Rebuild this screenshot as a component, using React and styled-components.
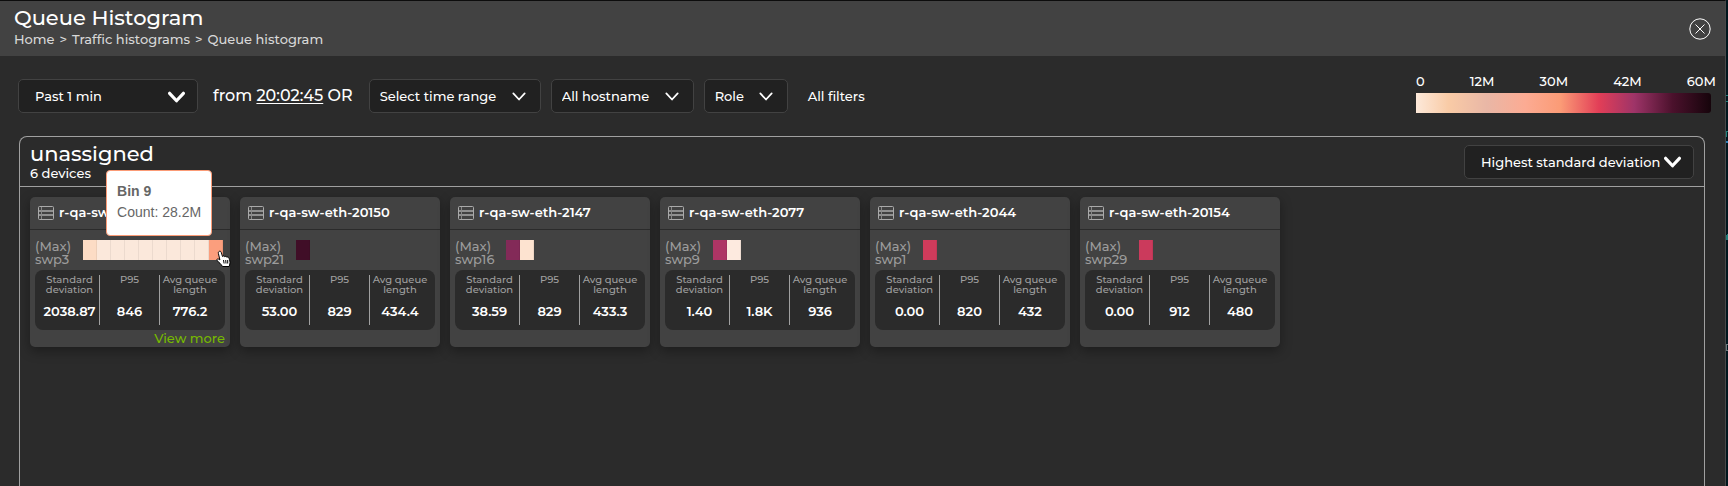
import React from "react";
import styled, { createGlobalStyle } from "styled-components";

const Global = createGlobalStyle`
  *, *::before, *::after { box-sizing: border-box; }
  body { margin: 0; background: #01161d; }
  button, select { font: inherit; color: inherit; }
  h1, h2, h3, p, dl, dt, dd, ol { margin: 0; padding: 0; font-weight: inherit; }
`;

const Page = styled.div`
  display: flex;
  min-height: 100vh;
`;

const Behind = styled.svg`
  flex: none;
`;

const Drawer = styled.div`
  flex: 1;
  display: flex;
  flex-direction: column;
  border-top: 1px solid #0c0c0c;
  border-right: 1px solid #484848;
  background: #2b2b2b;
  color: #fff;
  font-family: Montserrat, Inter, sans-serif;
  font-size: 13px;
  font-weight: 500;
  line-height: 16px;
`;

const Header = styled.header`
  display: flex;
  align-items: center;
  justify-content: space-between;
  height: 55px;
  padding: 0 14px;
  background: #424242;
`;

const Title = styled.h1`
  font-size: 21px;
  line-height: 26px;
`;

const Crumbs = styled.ol`
  display: flex;
  gap: 5px;
  list-style: none;
  color: #d8d8d8;
  margin-bottom: 5px;
  a { color: inherit; text-decoration: none; }
`;

const Crumb = styled.li`
  display: flex;
  gap: 5px;
  &:not(:last-child)::after { content: ">"; }
`;

const IconButton = styled.button`
  display: flex;
  padding: 0;
  border: 0;
  background: none;
  cursor: pointer;
`;

const Toolbar = styled.div`
  display: flex;
  align-items: flex-end;
  gap: 10px;
  padding: 17px 9px 0 18px;
`;

const Picker = styled.label`
  display: grid;
  align-items: center;
  width: ${(p) => p.$width}px;
  svg {
    grid-area: 1 / 1;
    justify-self: end;
    margin-right: ${(p) => p.$inset}px;
    pointer-events: none;
  }
`;

const Select = styled.select`
  grid-area: 1 / 1;
  width: 100%;
  height: 34px;
  padding: 0 ${(p) => p.$pad}px;
  appearance: none;
  border: 1px solid #424242;
  border-radius: 5px;
  background: #212121;
`;

const From = styled.p`
  padding: 0 6px 0 5px;
  font-size: 16px;
  line-height: 34px;
  span { text-decoration: underline; text-underline-offset: 2px; }
`;

const TextButton = styled.button`
  height: 34px;
  padding: 0 10px;
  border: 0;
  background: none;
  cursor: pointer;
`;

const Legend = styled.div`
  width: 300px;
  margin-left: auto;
`;

const LegendLabels = styled.div`
  display: flex;
  justify-content: space-between;
  margin-bottom: 4px;
`;

const LegendBar = styled.div`
  height: 20px;
  margin-right: 5px;
  border-radius: 0 3px 3px 0;
  background: linear-gradient(
    90deg,
    #fde9da 0%, #f9cba6 11%, #e9b7a6 24%, #fcab93 37%, #fb9b76 49%,
    #e23e57 62%, #9e3468 74%, #4b112c 87%, #16040b 100%
  );
`;

const Panel = styled.section`
  flex: 1;
  margin: 23px 20px 0 19px;
  border: 1px solid #a0a0a0;
  border-bottom: 0;
  border-radius: 8px 8px 0 0;
`;

const PanelHeader = styled.header`
  display: flex;
  align-items: center;
  justify-content: space-between;
  height: 50px;
  padding: 0 10px;
  border-bottom: 1px solid #a0a0a0;
`;

const PanelTitle = styled.h2`
  font-size: 21px;
  line-height: 22px;
`;

const Cards = styled.div`
  display: flex;
  flex-wrap: wrap;
  gap: 10px;
  padding: 10px;
`;

const Card = styled.article`
  width: 200px;
  height: 150px;
  border-radius: 5px;
  background: #424242;
  box-shadow: 0 4px 12px rgba(0, 0, 0, 0.35);
`;

const CardHeader = styled.header`
  display: flex;
  align-items: center;
  gap: 5px;
  height: 33px;
  padding: 0 8px;
  border-bottom: 1px solid #2b2b2b;
`;

const DeviceName = styled.h3`
  padding-bottom: 3px;
  font-size: 13px;
  font-weight: 600;
  line-height: 16px;
`;

const QueueRow = styled.div`
  display: flex;
  gap: 12px;
  height: 40px;
  padding: 10px 5px 0;
`;

const Port = styled.p`
  color: #9c9c9c;
  line-height: 13px;
`;

const Bins = styled.div`
  position: relative;
  display: flex;
  height: 20px;
`;

const Bin = styled.span`
  width: 14px;
  background: ${(p) => p.$color};
  box-shadow: inset -1px 0 rgba(0, 0, 0, 0.06);
`;

const Tooltip = styled.div`
  position: absolute;
  right: 11px;
  bottom: 24px;
  z-index: 1;
  padding: 10px 10px 12px;
  border: 1px solid #fb9b76;
  border-radius: 4px;
  background: #fff;
  color: #666;
  font: 14px/21px "Liberation Sans", Arial, sans-serif;
  white-space: nowrap;
`;

const Pointer = styled.svg`
  position: absolute;
  right: -8px;
  bottom: -8px;
  z-index: 2;
`;

const Stats = styled.dl`
  display: grid;
  grid-template-columns: repeat(3, 1fr);
  height: 60px;
  margin: 0 5px;
  padding: 5px;
  border-radius: 8px;
  background: #2b2b2b;
  text-align: center;
`;

const Stat = styled.div`
  display: flex;
  flex-direction: column;
  justify-content: space-between;
  align-items: center;
  padding-bottom: 5px;
  &:not(:last-child) { border-right: 1px solid #a0a0a0; }
  dt { color: #a0a0a0; font-size: 10px; line-height: 10px; white-space: nowrap; }
  dd { font-weight: 600; line-height: 18px; }
`;

const MoreLink = styled.a`
  display: block;
  padding: 0 5px;
  color: #76b900;
  text-align: right;
  text-decoration: none;
`;

const Chevron = ({ size, weight }) => (
  <svg width={size} height={size} viewBox="0 0 16 16" fill="none" stroke="#fff" strokeWidth={weight} strokeLinecap="round" strokeLinejoin="round">
    <path d="M1.500 5 8 12l6.500-7" />
  </svg>
);

const SwitchIcon = () => (
  <svg width="16" height="14" viewBox="0 0 16 14" fill="none" stroke="#aaa" aria-hidden="true">
    <rect x=".5" y=".5" width="15" height="13" rx="1" />
    <path d="M0 5h16M0 9h16" strokeWidth="1.500" />
    <path d="M3.500 1v12" stroke="#888" />
  </svg>
);

function Dropdown({ label, value, width, pad = 10, inset = 15, bold }) {
  return (
    <Picker $width={width} $inset={inset}>
      <Select aria-label={label} $pad={pad} defaultValue={value}>
        <option>{value}</option>
      </Select>
      <Chevron size={bold ? 17 : 14} weight={bold ? 3 : 2} />
    </Picker>
  );
}

const PALE = "#fbe8db";
const devices = [
  { name: "r-qa-sw-eth-2148", port: "swp3", bins: ["#fcdcc5", ...Array(8).fill(PALE), "#fb9e7d"], stats: ["2038.87", "846", "776.2"], active: true },
  { name: "r-qa-sw-eth-20150", port: "swp21", bins: ["#400e27"], stats: ["53.00", "829", "434.4"] },
  { name: "r-qa-sw-eth-2147", port: "swp16", bins: ["#832a58", "#fde3d0"], stats: ["38.59", "829", "433.3"] },
  { name: "r-qa-sw-eth-2077", port: "swp9", bins: ["#ae3565", "#fdeadf"], stats: ["1.40", "1.8K", "936"] },
  { name: "r-qa-sw-eth-2044", port: "swp1", bins: ["#cf3b5b"], stats: ["0.00", "820", "432"] },
  { name: "r-qa-sw-eth-20154", port: "swp29", bins: ["#cb3a5c"], stats: ["0.00", "912", "480"] },
];

function DeviceCard({ name, port, bins, stats, active }) {
  return (
    <Card>
      <CardHeader>
        <SwitchIcon />
        <DeviceName>{name}</DeviceName>
      </CardHeader>
      <QueueRow>
        <Port>(Max)<br />{port}</Port>
        <Bins>
          {bins.map((color, i) => <Bin key={i} $color={color} />)}
          {active && (
            <>
              <Tooltip role="tooltip">
                <strong>Bin 9</strong>
                <p>Count: 28.2M</p>
              </Tooltip>
              <Pointer width="15" height="18" viewBox="0 0 15 18" aria-hidden="true">
                <path d="M3 1.500c1-.8 2 0 2.300 1l1.200 4c.8-.9 1.800-.6 2.200.2.800-.6 1.700-.3 2.100.5.900-.4 1.900 0 2.200 1 .6 2 1.400 3.500.8 5.800l-.6 2.500H6.500C5 14 3 12.300 1 10.500c-.7-1.200.6-2 1.600-1.400l1.300.8L2.400 3.500c-.2-.8-.1-1.500.6-2z" fill="#fff" stroke="#000" />
                <path d="M7.500 10l.6 3.500M9.700 10l.3 3.500M11.700 10v3.500" stroke="#000" fill="none" />
              </Pointer>
            </>
          )}
        </Bins>
      </QueueRow>
      <Stats>
        <Stat><dt>Standard<br />deviation</dt><dd>{stats[0]}</dd></Stat>
        <Stat><dt>P95</dt><dd>{stats[1]}</dd></Stat>
        <Stat><dt>Avg queue<br />length</dt><dd>{stats[2]}</dd></Stat>
      </Stats>
      {active && <MoreLink href="#more">View more</MoreLink>}
    </Card>
  );
}

export default function App() {
  return (
    <Page>
      <Global />
      <Drawer>
        <Header>
          <div>
            <Title>Queue Histogram</Title>
            <Crumbs>
              <Crumb><a href="#home">Home</a></Crumb>
              <Crumb><a href="#traffic">Traffic histograms</a></Crumb>
              <Crumb>Queue histogram</Crumb>
            </Crumbs>
          </div>
          <IconButton aria-label="Close">
            <svg width="22" height="22" viewBox="0 0 22 22" fill="none" stroke="#fff">
              <circle cx="11" cy="11" r="10.200" />
              <path d="M6.500 6.500l9 9M15.500 6.500l-9 9" />
            </svg>
          </IconButton>
        </Header>
        <Toolbar>
          <Dropdown label="Period" value="Past 1 min" width={180} pad={16} inset={13} bold />
          <From>from <span>20:02:45</span> OR</From>
          <Dropdown label="Time range" value="Select time range" width={172} />
          <Dropdown label="Hostname" value="All hostname" width={143} />
          <Dropdown label="Role" value="Role" width={84} />
          <TextButton>All filters</TextButton>
          <Legend>
            <LegendLabels>
              <span>0</span><span>12M</span><span>30M</span><span>42M</span><span>60M</span>
            </LegendLabels>
            <LegendBar />
          </Legend>
        </Toolbar>
        <Panel>
          <PanelHeader>
            <div>
              <PanelTitle>unassigned</PanelTitle>
              <p>6 devices</p>
            </div>
            <Dropdown label="Sort by" value="Highest standard deviation" width={230} pad={16} inset={13} bold />
          </PanelHeader>
          <Cards>
            {devices.map((d) => <DeviceCard key={d.name} {...d} />)}
          </Cards>
        </Panel>
      </Drawer>
      <Behind width="2" height="360" viewBox="0 0 2 360" aria-hidden="true">
        <path d="M0 95.500h2M0 101.500h2M.5 131v6M0 131.500h2M.5 235v5M1.500 234v6" stroke="#1f7f7a" />
        <path d="M0 142h2" stroke="#2b7fb8" strokeWidth="2" />
        <path d="M0 344.500h2M.5 344v6M0 350.500h2" stroke="#6b7a7e" />
      </Behind>
    </Page>
  );
}
